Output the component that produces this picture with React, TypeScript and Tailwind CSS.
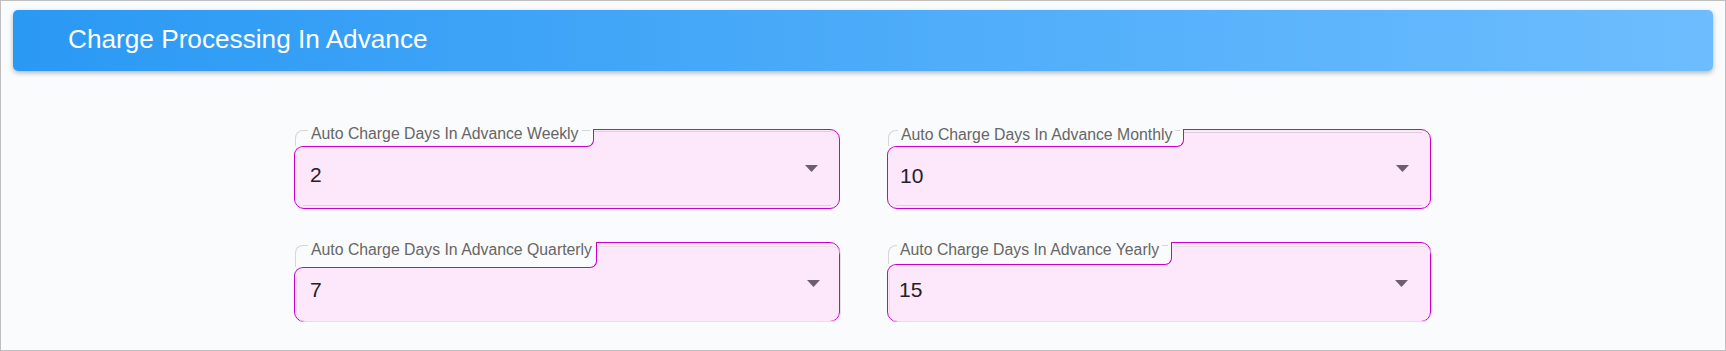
import React from "react";

type Field = {
  label: string;
  value: string;
  tab: string; // width/height of label tab
  corner: string; // top of convex corner piece
  grey: string; // grey outline inside tab
  line: string; // grey line inside pink
  labelPos: string;
  valuePos: string;
  arrowPos: string;
};

const fields: Field[] = [
  {
    label: "Auto Charge Days In Advance Weekly",
    value: "2",
    tab: "w-[300px] h-[18px]",
    corner: "top-[17px]",
    grey: "top-[1px]",
    line: "top-[1px] bottom-[2px] left-[8px] right-[8px] border-t border-b border-[#ddcfdd]",
    labelPos: "left-[14px] top-[-4px]",
    valuePos: "left-[16px] top-[34px]",
    arrowPos: "right-[22px] top-[36px]",
  },
  {
    label: "Auto Charge Days In Advance Monthly",
    value: "10",
    tab: "w-[297px] h-[18px]",
    corner: "top-[17px]",
    grey: "top-[1px]",
    line: "top-[2px] bottom-[2px] left-[8px] right-[8px] border-t border-b border-[#ddcfdd]",
    labelPos: "left-[11px] top-[-3px]",
    valuePos: "left-[13px] top-[35px]",
    arrowPos: "right-[22px] top-[36px]",
  },
  {
    label: "Auto Charge Days In Advance Quarterly",
    value: "7",
    tab: "w-[303px] h-[26px]",
    corner: "top-[25px]",
    grey: "top-[3px]",
    line: "top-[3px] bottom-[-1px] left-[1px] right-[-2px] rounded-[9px] border border-[#e6dfe6]",
    labelPos: "left-[14px] top-[-1px]",
    valuePos: "left-[16px] top-[36px]",
    arrowPos: "right-[20px] top-[38px]",
  },
  {
    label: "Auto Charge Days In Advance Yearly",
    value: "15",
    tab: "w-[285px] h-[23px]",
    corner: "top-[22px]",
    grey: "top-[3px]",
    line: "top-[3px] bottom-[-1px] left-[1px] right-[-2px] rounded-[9px] border border-[#e6dfe6]",
    labelPos: "left-[10px] top-[-1px]",
    valuePos: "left-[12px] top-[36px]",
    arrowPos: "right-[23px] top-[38px]",
  },
];

function SelectField({ f }: { f: Field }) {
  return (
    <div className="relative h-[80px]">
      {/* pink filled shape */}
      <div className="absolute inset-0 rounded-[10px] border border-[#cc00cc] bg-[#fce7fb]">
        <div className={`absolute ${f.line}`} />
      </div>
      {/* label tab (cut-out) */}
      <div
        className={`absolute left-0 top-0 ${f.tab} rounded-br-[7px] border-b border-r border-[#cc00cc] bg-[#fafbfd]`}
      >
        <div
          className={`absolute left-[1px] ${f.grey} right-[3px] bottom-0 rounded-tl-[8px] border-l border-t border-[#d6d6d6]`}
        />
        <span
          className={`absolute ${f.labelPos} whitespace-nowrap bg-[#fafbfd] px-[3px] text-[15.8px] leading-[18px] text-[#666666]`}
        >
          {f.label}
        </span>
      </div>
      {/* convex top-left corner of the body */}
      <div className={`absolute left-0 ${f.corner} h-[9px] w-[9px] bg-[#fafbfd]`}>
        <div className="h-full w-full rounded-tl-[9px] border-l border-t border-[#cc00cc] bg-[#fce7fb]" />
      </div>
      <span className={`absolute ${f.valuePos} text-[21px] leading-[24px] text-[#222222]`}>
        {f.value}
      </span>
      <svg className={`absolute ${f.arrowPos}`} width="13" height="7" viewBox="0 0 13 7">
        <polygon points="0,0 13,0 6.5,7" fill="#6d5e6d" />
      </svg>
    </div>
  );
}

export default function App() {
  return (
    <div className="h-[351px] w-[1726px] overflow-hidden border border-[#bfbfbf] bg-[#fafbfd] font-['Liberation_Sans',Arial,sans-serif]">
      <div className="mx-[12px] mt-[9px] flex h-[61px] items-center rounded-[5px] bg-[linear-gradient(to_right,#2a99f4,#6dbdfe)] pb-[3px] pl-[55px] shadow-[0_2px_5px_rgba(0,0,0,0.28)]">
        <h1 className="text-[26.2px] font-normal leading-[30px] text-white">Charge Processing In Advance</h1>
      </div>
      <div className="ml-[293px] mt-[58px] grid w-[1137px] grid-cols-[546px_544px] gap-x-[47px] gap-y-[33px]">
        {fields.map((f) => (
          <SelectField key={f.label} f={f} />
        ))}
      </div>
    </div>
  );
}
